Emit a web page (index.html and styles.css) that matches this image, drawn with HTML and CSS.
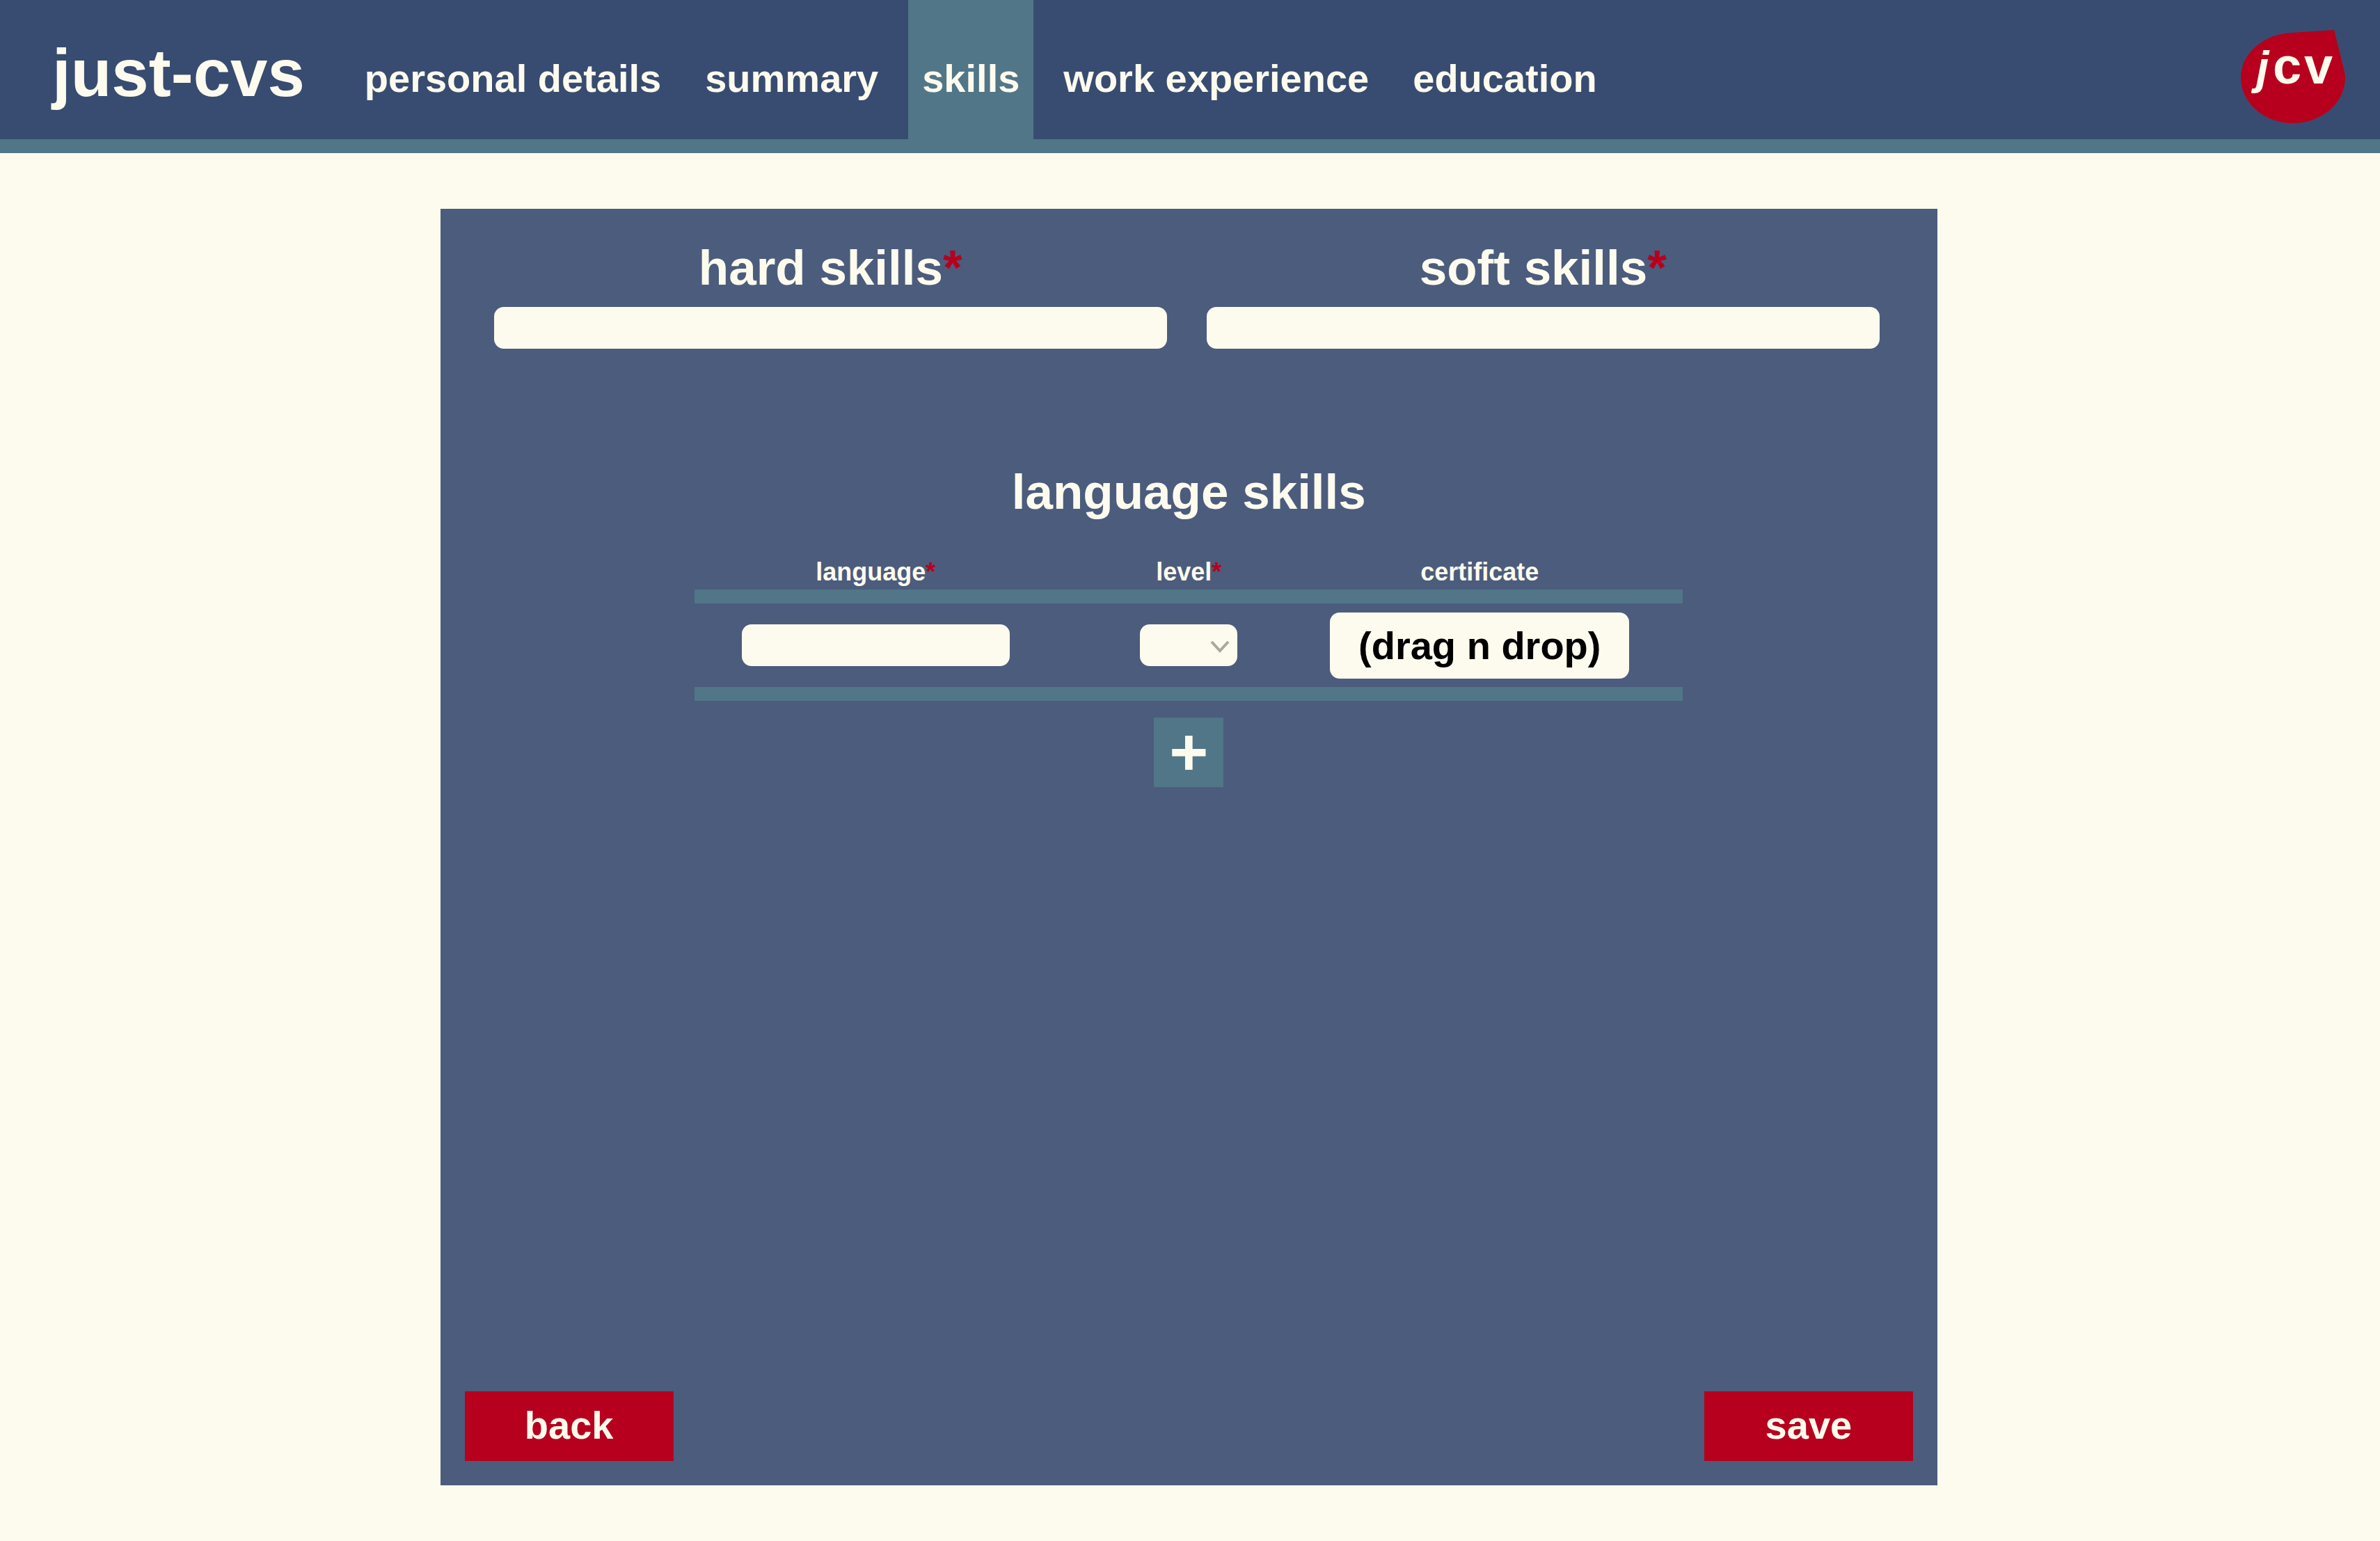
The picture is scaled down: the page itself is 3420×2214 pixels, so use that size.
FILE: index.html
```html
<!DOCTYPE html>
<html lang="en">
<head>
  <meta charset="utf-8">
  <title>just-cvs – skills</title>
  <link rel="stylesheet" href="styles.css">
</head>
<body>
  <header class="header">
    <a class="brand" href="#">just-cvs</a>
    <nav class="nav">
      <a class="nav-link" href="#">personal details</a>
      <a class="nav-link" href="#">summary</a>
      <a class="nav-link active" href="#" aria-current="page">skills</a>
      <a class="nav-link" href="#">work experience</a>
      <a class="nav-link" href="#">education</a>
    </nav>
    <a class="logo" href="#" aria-label="jcv">
      <svg width="150" height="134" viewBox="0 0 150 134">
        <path class="logo-drop" d="M134 0 L73 4 C32 6 0 34 0 69 C0 105 34 134 75 134 C116 134 150 105 150 69 C150 65 149 60 148 56 Z"/>
        <text class="logo-text" y="77"><tspan class="logo-slant" x="22">j</tspan><tspan x="46">c</tspan><tspan x="91">v</tspan></text>
      </svg>
    </a>
  </header>

  <main class="main">
    <form class="panel">
      <div class="skills">
        <div class="field">
          <label class="title" for="hard">hard skills<span class="required">*</span></label>
          <input class="input" id="hard" type="text" required>
        </div>
        <div class="field">
          <label class="title" for="soft">soft skills<span class="required">*</span></label>
          <input class="input" id="soft" type="text" required>
        </div>
      </div>

      <section class="languages">
        <h2 class="title">language skills</h2>
        <table class="table">
          <thead>
            <tr>
              <th class="col-language"><label for="language">language<span class="required">*</span></label></th>
              <th class="col-level"><label for="level">level<span class="required">*</span></label></th>
              <th class="col-certificate">certificate</th>
              <th></th>
            </tr>
          </thead>
          <tbody>
            <tr>
              <td><input class="input input-language" id="language" type="text" required></td>
              <td>
                <div class="select">
                  <select class="input" id="level" required><option></option></select>
                  <svg class="chevron" width="28" height="18" viewBox="0 0 28 18"><path d="M2 2 L14 15 L26 2"/></svg>
                </div>
              </td>
              <td><button class="drop" type="button">(drag n drop)</button></td>
              <td></td>
            </tr>
          </tbody>
        </table>
        <button class="add" type="button">+</button>
      </section>

      <div class="actions">
        <button class="action" type="button">back</button>
        <button class="action" type="submit">save</button>
      </div>
    </form>
  </main>
</body>
</html>
```

FILE: styles.css
```css
:root {
  --navy: #384c71;
  --panel: #4c5c7d;
  --teal: #517687;
  --cream: #fdfbee;
  --red: #b7001d;
}

* {
  box-sizing: border-box;
}

body {
  display: flex;
  flex-direction: column;
  min-height: 100vh;
  margin: 0;
  background: var(--cream);
  color: var(--cream);
  font-family: "Liberation Sans", Arial, sans-serif;
  font-size: 56px;
  font-weight: 700;
}

button,
input,
select {
  border: 0;
  color: inherit;
  font: inherit;
}

.header {
  display: flex;
  height: 220px;
  padding: 0 50px 0 75px;
  border-bottom: 20px solid var(--teal);
  background: var(--navy);
}

.brand {
  display: flex;
  align-items: center;
  padding-top: 10px;
  color: inherit;
  font-size: 96px;
  text-decoration: none;
}

.nav {
  display: flex;
  gap: 23px;
  margin-left: 66px;
}

.nav-link {
  display: flex;
  align-items: center;
  padding: 24px 20px 0;
  color: inherit;
  text-decoration: none;
}

.nav-link.active {
  background: var(--teal);
}

.logo {
  align-self: center;
  height: 134px;
  margin: 20px 0 0 auto;
}

.logo-drop {
  fill: var(--red);
}

.logo-text {
  fill: var(--cream);
  font-size: 74px;
}

.logo-slant {
  font-size: 66px;
  font-style: italic;
}

.main {
  display: flex;
  flex: 1;
  padding: 80px 18.6% 80px 18.5%;
}

.panel {
  display: flex;
  flex: 1;
  flex-direction: column;
  padding: 45px 35px 35px;
  background: var(--panel);
}

.skills {
  display: flex;
  gap: 57px;
  padding: 0 48px 0 42px;
}

.field {
  display: flex;
  flex: 1;
  flex-direction: column;
  gap: 16px;
}

.title {
  margin: 0;
  font-size: 71px;
  line-height: 80px;
  text-align: center;
}

.required {
  color: var(--red);
}

.input {
  display: block;
  width: 100%;
  height: 60px;
  padding: 0 16px;
  border-radius: 14px;
  background: var(--cream);
  color: #000;
  font-size: 36px;
}

.languages {
  display: flex;
  flex-direction: column;
  align-items: center;
  margin-top: 166px;
}

.table {
  width: 1420px;
  max-width: 100%;
  margin: 54px 0 24px;
  border-collapse: separate;
  border-spacing: 0;
  table-layout: fixed;
}

.table th {
  padding: 0 0 4px;
  border-bottom: 20px solid var(--teal);
  font-size: 36px;
  line-height: 42px;
}

.table td {
  height: 140px;
  padding: 0;
  border-bottom: 20px solid var(--teal);
  text-align: center;
  vertical-align: middle;
}

.col-language {
  width: 520px;
}

.col-level {
  width: 380px;
}

.col-certificate {
  width: 456px;
}

.input-language {
  width: 385px;
  margin: 0 auto;
}

.select {
  display: grid;
  align-items: center;
  width: 140px;
  margin: 0 auto;
}

.select > * {
  grid-area: 1 / 1;
}

.select select {
  appearance: none;
}

.chevron {
  justify-self: end;
  margin: 4px 11px 0 0;
  fill: none;
  pointer-events: none;
  stroke: #a9a79f;
  stroke-width: 4px;
}

.drop {
  display: block;
  width: 430px;
  height: 95px;
  margin: 0 auto;
  padding: 0;
  border-radius: 14px;
  background: var(--cream);
  color: #000;
}

.add {
  width: 100px;
  height: 100px;
  padding: 0;
  background: var(--teal);
  font-size: 96px;
  line-height: 100px;
}

.actions {
  display: flex;
  justify-content: space-between;
  margin-top: auto;
}

.action {
  width: 300px;
  height: 100px;
  padding: 0 0 4px;
  background: var(--red);
}
```
